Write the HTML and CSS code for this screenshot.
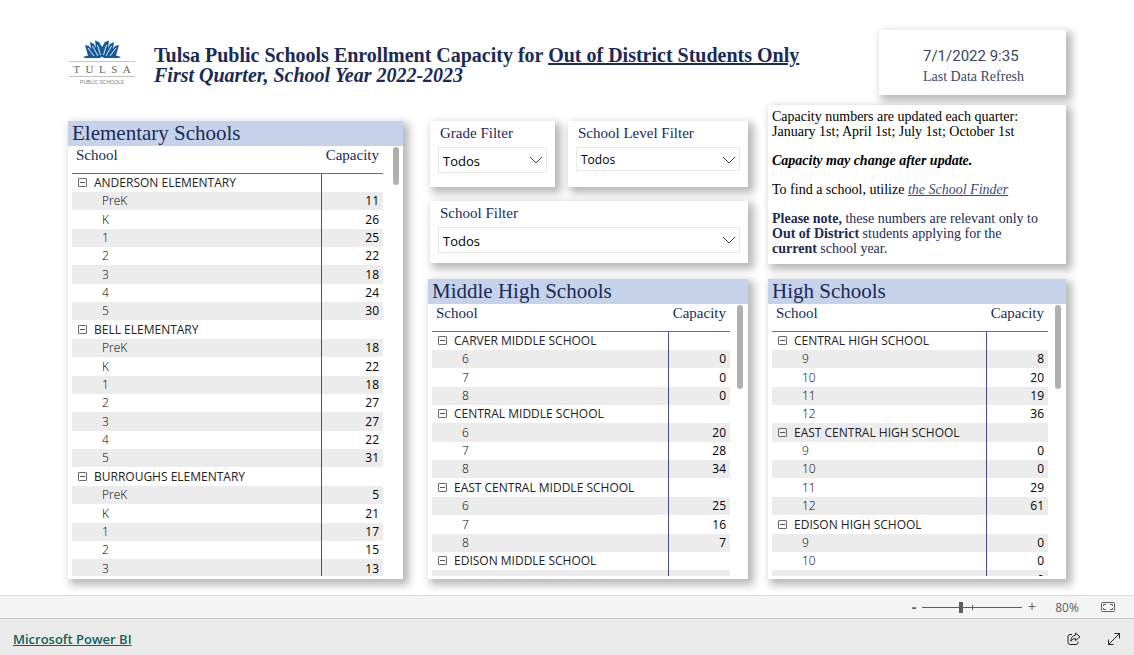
FILE: index.html
```html
<!DOCTYPE html>
<html lang="en">
<head>
<meta charset="utf-8">
<title>Tulsa Public Schools Enrollment Capacity</title>
<link rel="stylesheet" href="styles.css">
</head>
<body>
<main class="report">
  <header class="report-header">
    <svg class="logo" viewBox="0 0 68 48" role="img" aria-label="Tulsa Public Schools">
      <g fill="#125a9c">
        <path d="M15 18 20 16.500 17 6 21 7 23 10 22 3 26 5 28 9 27 1.500 31 3 34 8 37 3 41 1.500 40 9 42 5 46 3 45 10 47 7 51 6 48 16.500 53 18 51 19 36 19 34 17.500 32 19 17 19z"/>
      </g>
      <g fill="none" stroke="#fff" stroke-width=".9">
        <path d="M20 9 26 17M24.500 7 30 17M29.500 6 32.500 16M48 9 42 17M43.500 7 38 17M38.500 6 35.500 16"/>
      </g>
      <path d="M1 22.500H67M1 37.500H67" stroke="#c4c4c4" fill="none"/>
      <text class="logo-name" x="34" y="34" text-anchor="middle">T&nbsp;&nbsp;U&nbsp;&nbsp;L&nbsp;&nbsp;S&nbsp;&nbsp;A</text>
      <text class="logo-sub" x="34" y="45" text-anchor="middle">PUBLIC SCHOOLS</text>
    </svg>
    <h1 class="title">Tulsa Public Schools Enrollment Capacity for <u>Out of District Students Only</u><br><em>First Quarter, School Year 2022-2023</em></h1>
    <section class="card refresh">
      <p class="refresh-time">7/1/2022 9:35</p>
      <p class="refresh-label">Last Data Refresh</p>
    </section>
  </header>

  <div class="board">
    <section class="card panel elementary">
      <h2 class="panel-title">Elementary Schools</h2>
      <div class="panel-body">
        <table class="matrix">
          <thead><tr><th scope="col">School</th><th scope="col" class="num">Capacity</th></tr></thead>
          <tbody>
            <tr class="group"><th scope="row"><button class="toggle" aria-label="Collapse"></button>ANDERSON ELEMENTARY</th><td></td></tr>
            <tr><th scope="row">PreK</th><td>11</td></tr>
            <tr><th scope="row">K</th><td>26</td></tr>
            <tr><th scope="row">1</th><td>25</td></tr>
            <tr><th scope="row">2</th><td>22</td></tr>
            <tr><th scope="row">3</th><td>18</td></tr>
            <tr><th scope="row">4</th><td>24</td></tr>
            <tr><th scope="row">5</th><td>30</td></tr>
            <tr class="group"><th scope="row"><button class="toggle" aria-label="Collapse"></button>BELL ELEMENTARY</th><td></td></tr>
            <tr><th scope="row">PreK</th><td>18</td></tr>
            <tr><th scope="row">K</th><td>22</td></tr>
            <tr><th scope="row">1</th><td>18</td></tr>
            <tr><th scope="row">2</th><td>27</td></tr>
            <tr><th scope="row">3</th><td>27</td></tr>
            <tr><th scope="row">4</th><td>22</td></tr>
            <tr><th scope="row">5</th><td>31</td></tr>
            <tr class="group"><th scope="row"><button class="toggle" aria-label="Collapse"></button>BURROUGHS ELEMENTARY</th><td></td></tr>
            <tr><th scope="row">PreK</th><td>5</td></tr>
            <tr><th scope="row">K</th><td>21</td></tr>
            <tr><th scope="row">1</th><td>17</td></tr>
            <tr><th scope="row">2</th><td>15</td></tr>
            <tr><th scope="row">3</th><td>13</td></tr>
          </tbody>
        </table>
        <div class="scroll"><div class="thumb thumb-short"></div></div>
      </div>
    </section>

    <section class="filters">
      <div class="card filter filter-grade">
        <label for="grade">Grade Filter</label>
        <div class="select-box"><select id="grade"><option>Todos</option></select><svg class="chevron" viewBox="0 0 14 8"><path d="M1 1 7 7 13 1"/></svg></div>
      </div>
      <div class="card filter filter-level">
        <label for="level">School Level Filter</label>
        <div class="select-box"><select id="level"><option>Todos</option></select><svg class="chevron" viewBox="0 0 14 8"><path d="M1 1 7 7 13 1"/></svg></div>
      </div>
      <div class="card filter filter-school">
        <label for="school">School Filter</label>
        <div class="select-box"><select id="school"><option>Todos</option></select><svg class="chevron" viewBox="0 0 14 8"><path d="M1 1 7 7 13 1"/></svg></div>
      </div>
    </section>

    <section class="card note">
      <p>Capacity numbers are updated each quarter:<br>January 1st; April 1st; July 1st; October 1st</p>
      <p><strong><em>Capacity may change after update.</em></strong></p>
      <p>To find a school, utilize <a href="#finder">the School Finder</a></p>
      <p class="navy"><strong>Please note,</strong> these numbers are relevant only to <strong>Out of District</strong> students applying for the<br><strong>current</strong> school year.</p>
    </section>

    <section class="card panel">
      <h2 class="panel-title">Middle High Schools</h2>
      <div class="panel-body">
        <table class="matrix">
          <thead><tr><th scope="col">School</th><th scope="col" class="num">Capacity</th></tr></thead>
          <tbody>
            <tr class="group"><th scope="row"><button class="toggle" aria-label="Collapse"></button>CARVER MIDDLE SCHOOL</th><td></td></tr>
            <tr><th scope="row">6</th><td>0</td></tr>
            <tr><th scope="row">7</th><td>0</td></tr>
            <tr><th scope="row">8</th><td>0</td></tr>
            <tr class="group"><th scope="row"><button class="toggle" aria-label="Collapse"></button>CENTRAL MIDDLE SCHOOL</th><td></td></tr>
            <tr><th scope="row">6</th><td>20</td></tr>
            <tr><th scope="row">7</th><td>28</td></tr>
            <tr><th scope="row">8</th><td>34</td></tr>
            <tr class="group"><th scope="row"><button class="toggle" aria-label="Collapse"></button>EAST CENTRAL MIDDLE SCHOOL</th><td></td></tr>
            <tr><th scope="row">6</th><td>25</td></tr>
            <tr><th scope="row">7</th><td>16</td></tr>
            <tr><th scope="row">8</th><td>7</td></tr>
            <tr class="group"><th scope="row"><button class="toggle" aria-label="Collapse"></button>EDISON MIDDLE SCHOOL</th><td></td></tr>
            <tr><th scope="row"></th><td></td></tr>
          </tbody>
        </table>
        <div class="scroll scroll-narrow"><div class="thumb"></div></div>
      </div>
    </section>

    <section class="card panel">
      <h2 class="panel-title">High Schools</h2>
      <div class="panel-body">
        <table class="matrix">
          <thead><tr><th scope="col">School</th><th scope="col" class="num">Capacity</th></tr></thead>
          <tbody>
            <tr class="group"><th scope="row"><button class="toggle" aria-label="Collapse"></button>CENTRAL HIGH SCHOOL</th><td></td></tr>
            <tr><th scope="row">9</th><td>8</td></tr>
            <tr><th scope="row">10</th><td>20</td></tr>
            <tr><th scope="row">11</th><td>19</td></tr>
            <tr><th scope="row">12</th><td>36</td></tr>
            <tr class="group"><th scope="row"><button class="toggle" aria-label="Collapse"></button>EAST CENTRAL HIGH SCHOOL</th><td></td></tr>
            <tr><th scope="row">9</th><td>0</td></tr>
            <tr><th scope="row">10</th><td>0</td></tr>
            <tr><th scope="row">11</th><td>29</td></tr>
            <tr><th scope="row">12</th><td>61</td></tr>
            <tr class="group"><th scope="row"><button class="toggle" aria-label="Collapse"></button>EDISON HIGH SCHOOL</th><td></td></tr>
            <tr><th scope="row">9</th><td>0</td></tr>
            <tr><th scope="row">10</th><td>0</td></tr>
            <tr><th scope="row"></th><td>0</td></tr>
          </tbody>
        </table>
        <div class="scroll scroll-narrow"><div class="thumb"></div></div>
      </div>
    </section>
  </div>
</main>

<div class="zoom-bar">
  <button class="zoom-step zoom-out" aria-label="Zoom out">-</button>
  <div class="zoom-track"><input type="range" min="0" max="100" value="39" aria-label="Zoom"></div>
  <button class="zoom-step" aria-label="Zoom in">+</button>
  <span class="zoom-value">80%</span>
  <button class="icon-button" aria-label="Fit to page">
    <svg width="14" height="10" viewBox="0 0 14 10"><rect x=".5" y=".5" width="13" height="9" rx="1"/><path d="M5 2.500H2.500V4M2.500 6V7.500H5M9 2.500H11.500V4M11.500 6V7.500H9"/></svg>
  </button>
</div>

<footer class="footer">
  <a class="brand" href="#powerbi">Microsoft Power BI</a>
  <button class="icon-button dark" aria-label="Share">
    <svg width="14" height="14" viewBox="0 0 14 14"><path d="M5 2.500H3Q1 2.500 1 4.500V10.500Q1 12.500 3 12.500H9Q11 12.500 11 10.500V9.500"/><path d="M8.500 1 13 4.800 8.500 8.600V6.500Q5.500 6.500 3.800 9.300 4 3.800 8.500 3.200z"/></svg>
  </button>
  <button class="icon-button dark" aria-label="Full screen">
    <svg width="14" height="14" viewBox="0 0 14 14"><path d="M1.500 12.500 12.500 1.500M7.500 1.500H12.500V6.500M1.500 7.500V12.500H6.500"/></svg>
  </button>
</footer>
</body>
</html>
```

FILE: styles.css
```css
* { box-sizing: border-box; }

body {
  margin: 0;
  height: 100vh;
  display: flex;
  flex-direction: column;
  background: #fff;
  color: #000;
  font-family: "Open Sans", sans-serif;
  font-size: 12px;
}

h1, h2, p { margin: 0; font-weight: normal; }
button { border: 0; padding: 0; background: none; font: inherit; color: inherit; }

.report {
  flex: 1;
  min-height: 0;
  display: flex;
  flex-direction: column;
  padding: 30px 68px 16px;
}

.card {
  background: #fff;
  box-shadow: 4px 4px 8px 2px rgba(0, 0, 0, 0.28);
}

.report-header {
  display: flex;
  align-items: flex-start;
  margin-bottom: 10px;
}

.logo { width: 68px; height: 48px; margin: 9px 18px 0 0; flex: none; }
.logo-name { font: 11px "Liberation Serif", serif; fill: #65686c; }
.logo-sub { font: 5px "Liberation Sans", sans-serif; fill: #808080; }

.title {
  flex: 1;
  padding-top: 15px;
  font: bold 20px/20px "Liberation Serif", serif;
  color: #1b2a56;
  white-space: nowrap;
}

.refresh {
  flex: none;
  width: 187px;
  height: 65px;
  padding: 16px 0 0 44px;
  color: #3b4663;
}
.refresh-time { font: 15px/20px Roboto, sans-serif; }
.refresh-label { font: 14px/22px "Liberation Serif", serif; }

.board {
  flex: 1;
  min-height: 0;
  display: grid;
  grid-template-columns: 340fr 320fr 298fr;
  grid-template-rows: auto minmax(0, 1fr);
  column-gap: 20px;
}

.elementary { grid-row: 1 / 3; margin: 16px 5px 0 0; }

.filters {
  display: flex;
  flex-wrap: wrap;
  align-content: flex-start;
  gap: 14px 13px;
  padding: 16px 0 16px 2px;
}
.filter { padding: 4px 8px 0; color: #1b2a56; }
.filter label { display: block; padding-left: 2px; font: 15px/16px "Liberation Serif", serif; }
.filter-grade { width: 125px; height: 66px; }
.filter-level { flex: 1; height: 66px; }
.filter-school { width: 100%; height: 62px; }

.select-box { position: relative; margin-top: 6px; }
.select-box select {
  display: block;
  width: 100%;
  height: 26px;
  padding: 2px 4px 0;
  appearance: none;
  border: 1px solid #eaeaea;
  border-radius: 0;
  background: #fff;
  font: 13px "Open Sans", sans-serif;
  color: #000;
}
.filter-level select { height: 24px; font-size: 12px; padding-top: 0; }
.chevron {
  position: absolute;
  right: 4px;
  top: 9px;
  width: 14px;
  height: 8px;
  fill: none;
  stroke: #3c3c5c;
  pointer-events: none;
}

.note {
  margin-bottom: 15px;
  padding: 4px 4px 0;
  font: 14px/15px "Liberation Serif", serif;
}
.note p + p { margin-top: 14px; }
.note a { color: #3b4a85; font-style: italic; }
.note .navy { color: #1b2a56; }

.panel { display: flex; flex-direction: column; min-height: 0; padding-bottom: 3px; }
.panel-title {
  padding-left: 4px;
  background: #c5d2ea;
  color: #1b2a56;
  font: 21px/25px "Liberation Serif", serif;
}
.panel-body {
  flex: 1;
  min-height: 0;
  overflow: hidden;
  display: flex;
  align-items: flex-start;
  padding: 0 4px;
}

.matrix { flex: 1; border-collapse: collapse; table-layout: fixed; }
.matrix thead th {
  height: 27px;
  padding: 0 4px;
  border-bottom: 1px solid #5a6ba0;
  font: 15px/19px "Liberation Serif", serif;
  text-align: left;
  vertical-align: top;
  color: #1b2a56;
}
.matrix thead .num { width: 62px; text-align: right; }
.matrix tbody tr { height: 18px; }
.matrix tbody tr:nth-child(8n + 1),
.matrix tbody tr:nth-child(8n + 3),
.matrix tbody tr:nth-child(8n + 6) { height: 19px; }
.matrix tbody tr:nth-child(even) { background: #ececec; }
.matrix tbody th {
  padding: 0 0 0 30px;
  font-size: 12px;
  line-height: 18px;
  font-weight: 300;
  text-align: left;
}
.matrix tbody .group th { padding-left: 6px; font-weight: 400; color: #222; white-space: nowrap; }
.matrix tbody td {
  padding: 0 4px 0 0;
  border-left: 1px solid #3f5088;
  line-height: 18px;
  font-weight: 500;
  text-align: right;
}

.toggle {
  display: inline-flex;
  align-items: center;
  justify-content: center;
  width: 9px;
  height: 9px;
  margin: 0 7px 2px 0;
  border: 1px solid #6a6a6a;
  border-radius: 1px;
  vertical-align: middle;
}
.toggle::before { content: ""; width: 5px; height: 1px; background: #555; }

.scroll { flex: none; width: 16px; padding: 1px 0 0 10px; }
.scroll-narrow { width: 14px; padding-left: 7px; }
.thumb { width: 6px; height: 84px; border-radius: 3px; background: #b0b0b0; }
.thumb-short { height: 38px; }

.zoom-bar {
  flex: none;
  display: flex;
  align-items: center;
  justify-content: flex-end;
  height: 24px;
  padding-right: 19px;
  border-top: 1px solid #dcdcdc;
  border-bottom: 1px solid #c8c8c8;
  background: #f4f4f4;
  color: #605e5c;
}
.zoom-step { width: 14px; font-size: 14px; line-height: 20px; }
.zoom-out { width: 10px; font-weight: 700; }
.zoom-track { position: relative; width: 100px; height: 20px; margin: 0 3px; }
.zoom-track::after {
  content: "";
  position: absolute;
  left: 50px;
  top: 8px;
  width: 1px;
  height: 5px;
  background: #605e5c;
}
.zoom-track input { display: block; width: 100%; height: 20px; margin: 0; appearance: none; background: none; }
.zoom-track input::-webkit-slider-runnable-track {
  height: 11px;
  background: linear-gradient(#605e5c, #605e5c) center / 100% 1px no-repeat;
}
.zoom-track input::-webkit-slider-thumb { appearance: none; width: 4px; height: 11px; background: #605e5c; }
.zoom-value { width: 24px; margin: 0 22px 0 16px; text-align: center; }

.icon-button { display: flex; }
.icon-button svg { fill: none; stroke: #605e5c; }
.icon-button.dark svg { stroke: #252423; }

.footer {
  flex: none;
  display: flex;
  align-items: center;
  gap: 26px;
  height: 36px;
  padding: 4px 13px 0;
  background: #eaeaea;
}
.brand { margin-right: auto; font-size: 13px; font-weight: 600; color: #0f6358; }
```
